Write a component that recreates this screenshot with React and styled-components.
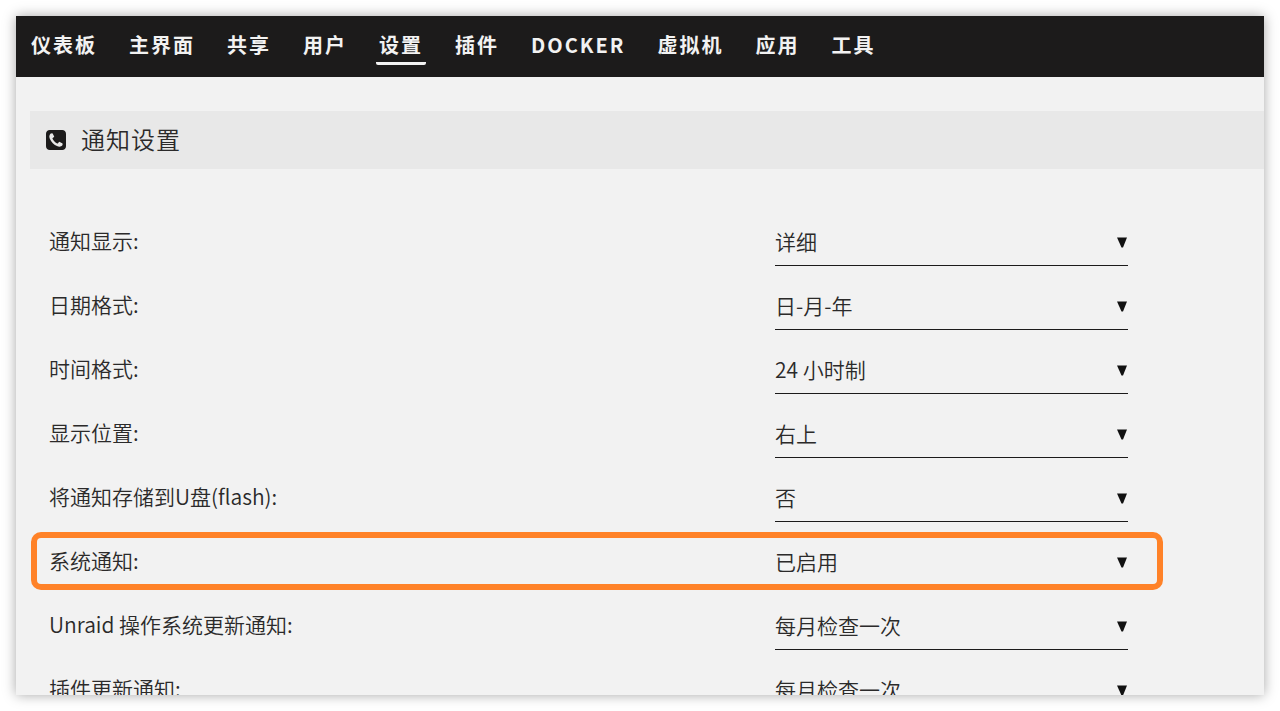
import { useState } from 'react';
import styled, { createGlobalStyle } from 'styled-components';

const GlobalStyle = createGlobalStyle`
  * {
    box-sizing: border-box;
  }
  body {
    margin: 0;
    background-color: #ffffff;
    color: #2b2a2a;
    font-family: "Noto Sans CJK SC", sans-serif;
  }
`;

const Page = styled.div`
  height: 100vh;
  padding: 16px;
`;

const Panel = styled.div`
  height: 100%;
  overflow: hidden;
  background-color: #f2f2f2;
  box-shadow: 0 0 12px rgba(0, 0, 0, 0.35);
`;

const Nav = styled.nav`
  display: flex;
  gap: 26px;
  padding: 12px;
  background-color: #1c1b1b;
`;

const NavLink = styled.a`
  padding: 0 3px;
  border-bottom: 3px solid ${props => props.$active ? "#f2f2f2" : "transparent"};
  border-radius: 2px;
  color: #f2f2f2;
  font-size: 20px;
  font-weight: bold;
  line-height: 34px;
  letter-spacing: 2px;
  text-transform: uppercase;
  text-decoration: none;
`;

const Content = styled.main`
  padding: 34px 0 0 14px;
`;

const TitleBar = styled.header`
  display: flex;
  align-items: center;
  gap: 15px;
  height: 58px;
  padding: 0 16px;
  background-color: #e8e8e8;
`;

const Title = styled.h1`
  margin: 0;
  padding-bottom: 4px;
  font-size: 24px;
  font-weight: 350;
  letter-spacing: 1px;
`;

const Form = styled.form`
  padding: 41px 5px 0 19px;
`;

const Row = styled.div`
  position: relative;
  display: grid;
  grid-template-columns: 3fr 2fr;
  align-items: center;
  height: 64px;
`;

const Label = styled.label`
  padding-bottom: 4px;
  font-size: 21px;
  font-weight: 350;
`;

const Field = styled.div`
  position: relative;
  width: 73%;
`;

const Select = styled.select`
  display: block;
  width: 100%;
  height: 48px;
  padding: 0 0 2px;
  appearance: none;
  background: transparent;
  border: none;
  border-bottom: 1px solid #1c1b1b;
  border-radius: 0;
  outline: none;
  color: inherit;
  font-family: inherit;
  font-size: 21px;
  font-weight: 350;
`;

const Arrow = styled.svg`
  position: absolute;
  top: 19px;
  right: 1px;
  pointer-events: none;
`;

const Highlight = styled.div`
  position: absolute;
  top: 2px;
  bottom: 4px;
  left: -18px;
  right: 96px;
  border: 6px solid #ff8228;
  border-radius: 10px;
  pointer-events: none;
`;

const links = ["仪表板", "主界面", "共享", "用户", "设置", "插件", "Docker", "虚拟机", "应用", "工具"];

const settings = [
  { id: "display", label: "通知显示:", options: ["详细", "摘要"] },
  { id: "date", label: "日期格式:", options: ["日-月-年", "月-日-年", "年-月-日"] },
  { id: "time", label: "时间格式:", options: ["24 小时制", "12 小时制"] },
  { id: "position", label: "显示位置:", options: ["右上", "左上", "右下", "左下"] },
  { id: "flash", label: "将通知存储到U盘(flash):", options: ["否", "是"] },
  { id: "system", label: "系统通知:", options: ["已启用", "已禁用"], highlight: true },
  { id: "unraid", label: "Unraid 操作系统更新通知:", options: ["每月检查一次", "每天检查一次", "从不检查"] },
  { id: "plugins", label: "插件更新通知:", options: ["每月检查一次", "每天检查一次", "从不检查"] },
];

const PhoneIcon = () => (
  <svg width="20" height="20" viewBox="0 128 1536 1536" fill="#1c1b1b" aria-hidden="true">
    <path d="M1280 1193q0-11-2-16t-18-16.5-40.5-25-47.5-26.5-45.5-25-28.5-15q-5-3-19-13t-25-15-21-5q-15 0-36.5 20.5t-39.5 45-38.5 45-33.5 20.5q-7 0-16.5-3.5t-15.5-6.5-17-9.5-14-8.5q-99-55-170-126.5t-127-170.5q-2-3-8.5-14t-9.5-17-6.5-15.5-3.5-16.5q0-13 20.5-33.5t45-38.5 45-39.5 20.5-36.5q0-10-5-21t-15-25-13-19q-3-6-15-28.5t-25-45.5-26.5-47.5-25-40.5-16.5-18-16-2q-48 0-101 22-46 21-80 94.5t-34 130.5q0 16 2.5 34t5 30.5 9 33 10 29.5 12.5 33 11 30q60 164 216.5 320.5t320.5 216.5q6 2 30 11t33 12.5 29.5 10 33 9 30.5 5 34 2.5q57 0 130.5-34t94.5-80q22-53 22-101zm256-777v960q0 119-84.5 203.5t-203.5 84.5h-960q-119 0-203.5-84.5t-84.5-203.5v-960q0-119 84.5-203.5t203.5-84.5h960q119 0 203.5 84.5t84.5 203.5z" />
  </svg>
);

const Setting = ({ id, label, options, highlight }) => {
  const [value, setValue] = useState(options[0]);

  return (
    <Row>
      <Label htmlFor={id}>{label}</Label>
      <Field>
        <Select id={id} value={value} onChange={(e) => setValue(e.target.value)}>
          {options.map((option) => (
            <option key={option} value={option}>{option}</option>
          ))}
        </Select>
        <Arrow width="10" height="11" viewBox="0 0 10 11" aria-hidden="true">
          <path d="M0 0.5H10L6 10.5H4.5Z" fill="#111111" />
        </Arrow>
      </Field>
      {highlight && <Highlight />}
    </Row>
  );
};

const App = () => {
  return (
    <Page>
      <GlobalStyle />
      <Panel>
        <Nav>
          {links.map((link) => (
            <NavLink key={link} href="#" $active={link === "设置"}>{link}</NavLink>
          ))}
        </Nav>
        <Content>
          <TitleBar>
            <PhoneIcon />
            <Title>通知设置</Title>
          </TitleBar>
          <Form>
            {settings.map((setting) => (
              <Setting key={setting.id} {...setting} />
            ))}
          </Form>
        </Content>
      </Panel>
    </Page>
  );
};

export default App;
